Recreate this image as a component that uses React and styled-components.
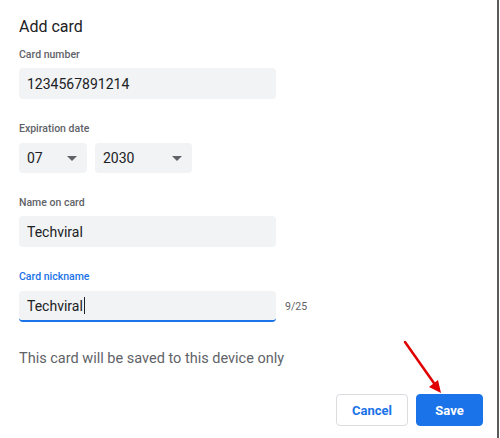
import React from "react";
import styled, { createGlobalStyle } from "styled-components";

const Global = createGlobalStyle`
  html, body {
    margin: 0;
    padding: 0;
    background: #fff;
  }
  body {
    font-family: Roboto, "Liberation Sans", Arial, sans-serif;
  }
`;

const Dialog = styled.div`
  position: relative;
  box-sizing: border-box;
  width: 499px;
  height: 438px;
  padding: 16px 14px 0 19px;
  border-right: 2px solid #5a5a5a;
  background: #fff;
  display: flex;
  flex-direction: column;
`;

const Title = styled.h1`
  margin: 0 0 10px;
  font-size: 16px;
  line-height: 22px;
  font-weight: 400;
  color: #202124;
`;

const Field = styled.div`
  display: flex;
  flex-direction: column;
  margin-bottom: ${(p) => p.gap ?? 23}px;
`;

const Label = styled.label`
  font-size: 10.5px;
  line-height: 14px;
  font-weight: 500;
  color: ${(p) => (p.focused ? "#1a73e8" : "#5f6368")};
  margin-bottom: ${(p) => p.gap ?? 6}px;
`;

const Input = styled.div`
  box-sizing: border-box;
  width: 257px;
  height: 31px;
  padding: 0 8px;
  display: flex;
  align-items: center;
  background: #f1f3f4;
  border-radius: 4px;
  font-size: 14px;
  color: #202124;
  border-bottom: ${(p) => (p.focused ? "2px solid #1a73e8" : "none")};
`;

const Caret = styled.span`
  display: inline-block;
  width: 1px;
  height: 17px;
  background: #202124;
  margin-left: 1px;
`;

const Row = styled.div`
  display: flex;
  align-items: center;
  gap: ${(p) => p.gap ?? 8}px;
`;

const Select = styled.div`
  box-sizing: border-box;
  width: ${(p) => p.w}px;
  height: 30px;
  padding: 0 10px 0 8px;
  display: flex;
  align-items: center;
  justify-content: space-between;
  background: #f1f3f4;
  border-radius: 4px;
  font-size: 14px;
  color: #202124;
`;

const Triangle = styled.span`
  width: 0;
  height: 0;
  border-left: 5px solid transparent;
  border-right: 5px solid transparent;
  border-top: 5px solid #5f6368;
`;

const Counter = styled.span`
  font-size: 10.5px;
  color: #5f6368;
`;

const Note = styled.p`
  margin: 27px 0 0;
  font-size: 14.5px;
  line-height: 20px;
  color: #5f6368;
`;

const Footer = styled.div`
  margin-top: 25px;
  display: flex;
  justify-content: flex-end;
  gap: 8px;
`;

const Button = styled.button`
  box-sizing: border-box;
  width: ${(p) => p.w}px;
  height: 32px;
  border-radius: 4px;
  font-family: inherit;
  font-size: 13px;
  font-weight: 700;
  cursor: pointer;
  border: 1px solid ${(p) => (p.primary ? "#1a73e8" : "#dadce0")};
  background: ${(p) => (p.primary ? "#1a73e8" : "#fff")};
  color: ${(p) => (p.primary ? "#fff" : "#1a73e8")};
`;

const Pointer = styled.svg`
  position: absolute;
  left: 398px;
  top: 336px;
  pointer-events: none;
`;

export default function App() {
  return (
    <>
      <Global />
      <Dialog>
        <Title>Add card</Title>

        <Field>
          <Label>Card number</Label>
          <Input>1234567891214</Input>
        </Field>

        <Field>
          <Label gap={7}>Expiration date</Label>
          <Row>
            <Select w={68}>
              07 <Triangle />
            </Select>
            <Select w={97}>
              2030 <Triangle />
            </Select>
          </Row>
        </Field>

        <Field>
          <Label>Name on card</Label>
          <Input>Techviral</Input>
        </Field>

        <Field gap={0}>
          <Label focused gap={7}>Card nickname</Label>
          <Row gap={9}>
            <Input focused>
              Techviral
              <Caret />
            </Input>
            <Counter>9/25</Counter>
          </Row>
        </Field>

        <Note>This card will be saved to this device only</Note>

        <Footer>
          <Button w={72}>Cancel</Button>
          <Button primary w={67}>Save</Button>
        </Footer>

        <Pointer width="50" height="62" viewBox="0 0 50 62">
          <line x1="7" y1="6" x2="38" y2="50" stroke="#e00000" strokeWidth="2.5" strokeLinecap="round" />
          <polygon points="43,57 31,51 40,44" fill="#e00000" />
        </Pointer>
      </Dialog>
    </>
  );
}
